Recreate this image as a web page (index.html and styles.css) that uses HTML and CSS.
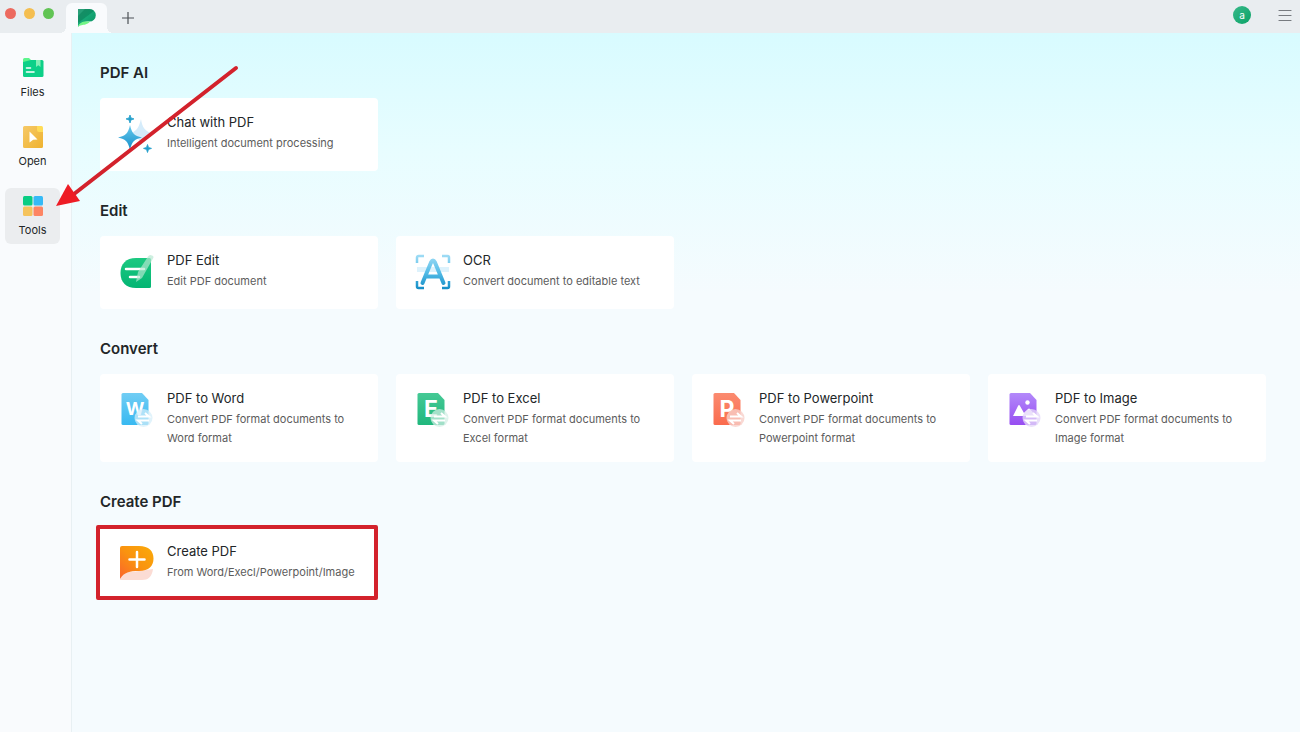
FILE: index.html
```html
<!DOCTYPE html>
<html lang="en">
<head>
<meta charset="utf-8">
<meta name="viewport" content="width=device-width, initial-scale=1">
<title>PDF Tools</title>
<link rel="stylesheet" href="styles.css">
</head>
<body>
<div class="app">
  <header class="titlebar">
    <div class="lights">
      <button class="light light-close" aria-label="Close"></button>
      <button class="light light-min" aria-label="Minimize"></button>
      <button class="light light-max" aria-label="Zoom"></button>
    </div>
    <button class="tab" aria-label="Home tab">
      <svg width="20" height="20" viewBox="0 0 20 20" aria-hidden="true">
        <defs><linearGradient id="logo" x1="0" y1="0" x2="1" y2="1"><stop offset="0" stop-color="#2f9c78"/><stop offset=".45" stop-color="#18a978"/><stop offset="1" stop-color="#07915f"/></linearGradient></defs>
        <path d="M1 1h11.500a6.300 6.300 0 0 1 0 12.600C7 13.600 3 15 1 19z" fill="url(#logo)"/>
        <path d="M1 8L8 1h4.500c2 0 3.500.7 4.500 2L1 15z" fill="#067a52" opacity=".5"/>
        <path d="M1 19c1-3.500 4-5.400 8-5.400h4C11 16.500 7 17 4.500 17.200 3 17.400 2 18 1 19z" fill="#72f586"/>
      </svg>
    </button>
    <button class="icon-btn" aria-label="New tab">
      <svg width="12" height="12" viewBox="0 0 12 12" aria-hidden="true"><path d="M6 0v12M0 6h12" stroke="#4d5156" stroke-width="1.200"/></svg>
    </button>
    <div class="account">
      <button class="avatar" aria-label="Account">a</button>
      <button class="icon-btn" aria-label="Menu">
        <svg width="14" height="12" viewBox="0 0 14 12" aria-hidden="true"><path d="M1 1.500h12M1 6.500h12M1 11.500h12" stroke="#777b80" stroke-width="1.200" stroke-linecap="round"/></svg>
      </button>
    </div>
  </header>

  <div class="body">
    <nav class="sidebar">
      <button class="nav-item">
        <svg width="22" height="22" viewBox="0 0 22 22" aria-hidden="true">
          <rect x="1" y="3" width="20.500" height="17" rx="1.500" fill="#0dd088"/>
          <path d="M1 5V2.500A1.500 1.500 0 0 1 2.500 1H7l2 2z" fill="#5df58d"/>
          <path d="M14 3h4.500v7l-2.200-1.800L14 10z" fill="#83efb6"/>
          <path d="M4.500 11h4M4.500 15h7.500" stroke="#fff" stroke-width="1.600" stroke-linecap="round"/>
        </svg>
        <span>Files</span>
      </button>
      <button class="nav-item">
        <svg width="22" height="22" viewBox="0 0 22 22" aria-hidden="true">
          <defs><linearGradient id="open" x1="0" y1="0" x2="1" y2="1"><stop offset="0" stop-color="#f6c968"/><stop offset="1" stop-color="#efb22f"/></linearGradient></defs>
          <path d="M2.500 0H15l6 6v14.500a1.500 1.500 0 0 1-1.500 1.500h-17A1.500 1.500 0 0 1 1 20.500v-19A1.500 1.500 0 0 1 2.500 0z" fill="url(#open)"/>
          <path d="M15 0h4.500A1.500 1.500 0 0 1 21 1.500V6h-4a2 2 0 0 1-2-2z" fill="#ffdc57"/>
          <path d="M7.500 5.500l8 8-4.300.2-3.700 2.800z" fill="#fff"/>
        </svg>
        <span>Open</span>
      </button>
      <button class="nav-item nav-item-active" aria-current="page">
        <svg width="22" height="22" viewBox="0 0 22 22" aria-hidden="true">
          <rect x="1" y="1" width="9.500" height="9.500" rx="1.500" fill="#09cd82"/>
          <rect x="11.500" y="1" width="9.500" height="9.500" rx="1.500" fill="#36baf6"/>
          <rect x="1" y="11.500" width="9.500" height="9.500" rx="1.500" fill="#f5c35c"/>
          <rect x="11.500" y="11.500" width="9.500" height="9.500" rx="1.500" fill="#fd8563"/>
        </svg>
        <span>Tools</span>
      </button>
    </nav>

    <main class="content">
      <section class="group">
        <h2>PDF AI</h2>
        <div class="cards">
          <button class="card">
            <svg class="card-icon" viewBox="0 0 38 38" aria-hidden="true">
              <defs><linearGradient id="star" x1="0" y1="0" x2="0" y2="1"><stop offset="0" stop-color="#66c9ed"/><stop offset="1" stop-color="#168fca"/></linearGradient></defs>
              <path d="M23 4c1 8 4 12 10 14-6 2-9 5-10 13-2-8-4-11-10-13 6-2 8-6 10-14z" fill="#d5ecfb"/>
              <path d="M12 10c2 8.500 4 10.500 12 12.500-8 2-10 4-12 12.500-2-8.500-4-10.500-12-12.500 8-2 10-4 12-12.500z" fill="url(#star)"/>
              <path d="M12 0l1 2.900 3 1-3 1-1 3.100-1-3.100-3-1 3-1zM29.500 29.500l1 2.900 3 1-3 1-1 3.100-1-3.100-3-1 3-1z" fill="#249fcb" stroke="#249fcb" stroke-width=".8"/>
            </svg>
            <span class="card-text"><span class="card-title">Chat with PDF</span><span class="card-desc">Intelligent document processing</span></span>
          </button>
        </div>
      </section>

      <section class="group">
        <h2>Edit</h2>
        <div class="cards">
          <button class="card">
            <svg class="card-icon" viewBox="0 0 38 38" aria-hidden="true">
              <defs><linearGradient id="edit" x1="0" y1="0" x2="0" y2="1"><stop offset="0" stop-color="#1cc981"/><stop offset="1" stop-color="#03b573"/></linearGradient></defs>
              <path d="M18 5h13.500A1.500 1.500 0 0 1 33 6.500v27a1.500 1.500 0 0 1-1.500 1.500H18C8 35 2.500 29 2.500 20S8 5 18 5z" fill="url(#edit)"/>
              <path d="M8 16h18M12 24h9" stroke="#fff" stroke-width="2.500" stroke-linecap="round"/>
              <path d="M34 2.500a2 2 0 0 1 1 3L24 25l-6 4 2-10L30 3.500a3 3 0 0 1 4-1z" fill="#b7e8d1" opacity=".68"/>
            </svg>
            <span class="card-text"><span class="card-title">PDF Edit</span><span class="card-desc">Edit PDF document</span></span>
          </button>
          <button class="card">
            <svg class="card-icon" viewBox="0 0 38 38" aria-hidden="true">
              <defs><linearGradient id="ocr" gradientUnits="userSpaceOnUse" x1="0" y1="2" x2="0" y2="36"><stop offset="0" stop-color="#a0dcf5"/><stop offset=".5" stop-color="#55bde8"/><stop offset="1" stop-color="#148dc6"/></linearGradient></defs>
              <path d="M3 10V4.500A1.500 1.500 0 0 1 4.500 3H10M28 3h5.500A1.500 1.500 0 0 1 35 4.500V10M3 28v5.500A1.500 1.500 0 0 0 4.500 35H10M28 35h5.500a1.500 1.500 0 0 0 1.500-1.500V28" fill="none" stroke="url(#ocr)" stroke-width="2.500"/>
              <path d="M3 14h32v5H3z" fill="#d5effb" opacity=".8"/>
              <path d="M8.500 30L17 9.500q2-4 4 0L29.500 30M13 23.500h12" fill="none" stroke="url(#ocr)" stroke-width="4" stroke-linecap="round"/>
            </svg>
            <span class="card-text"><span class="card-title">OCR</span><span class="card-desc">Convert document to editable text</span></span>
          </button>
        </div>
      </section>

      <section class="group">
        <h2>Convert</h2>
        <div class="cards">
          <button class="card">
            <svg class="card-icon" viewBox="0 0 38 38" aria-hidden="true">
              <defs><linearGradient id="word" x1="0" y1="0" x2="0" y2="1"><stop offset="0" stop-color="#71cdf4"/><stop offset="1" stop-color="#38b9f1"/></linearGradient></defs>
              <path d="M5 2h19l6.500 7v23.500a1.500 1.500 0 0 1-1.500 1.500H5a1.500 1.500 0 0 1-1.500-1.500v-29A1.500 1.500 0 0 1 5 2z" fill="url(#word)"/>
              <text class="glyph" x="17" y="24" font-size="18">W</text>
              <circle cx="25.500" cy="27" r="9" fill="#d5eef9" opacity=".72"/>
              <path d="M20 25.500h11l-4-3.500M31 29.500H20l4 3.500" fill="none" stroke="#fff" stroke-width="2"/>
            </svg>
            <span class="card-text"><span class="card-title">PDF to Word</span><span class="card-desc">Convert PDF format documents to Word format</span></span>
          </button>
          <button class="card">
            <svg class="card-icon" viewBox="0 0 38 38" aria-hidden="true">
              <defs><linearGradient id="excel" x1="0" y1="0" x2="0" y2="1"><stop offset="0" stop-color="#45c995"/><stop offset="1" stop-color="#20b77d"/></linearGradient></defs>
              <path d="M5 2h19l6.500 7v23.500a1.500 1.500 0 0 1-1.500 1.500H5a1.500 1.500 0 0 1-1.500-1.500v-29A1.500 1.500 0 0 1 5 2z" fill="url(#excel)"/>
              <text class="glyph" x="17" y="26" font-size="23">E</text>
              <circle cx="25.500" cy="27" r="9" fill="#d2eee4" opacity=".72"/>
              <path d="M20 25.500h11l-4-3.500M31 29.500H20l4 3.500" fill="none" stroke="#fff" stroke-width="2"/>
            </svg>
            <span class="card-text"><span class="card-title">PDF to Excel</span><span class="card-desc">Convert PDF format documents to Excel format</span></span>
          </button>
          <button class="card">
            <svg class="card-icon" viewBox="0 0 38 38" aria-hidden="true">
              <defs><linearGradient id="ppt" x1="0" y1="0" x2="0" y2="1"><stop offset="0" stop-color="#fb8b70"/><stop offset="1" stop-color="#fa6b4d"/></linearGradient></defs>
              <path d="M5 2h19l6.500 7v23.500a1.500 1.500 0 0 1-1.500 1.500H5a1.500 1.500 0 0 1-1.500-1.500v-29A1.500 1.500 0 0 1 5 2z" fill="url(#ppt)"/>
              <text class="glyph" x="17" y="26" font-size="23">P</text>
              <circle cx="25.500" cy="27" r="9" fill="#f8d0c9" opacity=".8"/>
              <path d="M20 25.500h11l-4-3.500M31 29.500H20l4 3.500" fill="none" stroke="#fff" stroke-width="2"/>
            </svg>
            <span class="card-text"><span class="card-title">PDF to Powerpoint</span><span class="card-desc">Convert PDF format documents to Powerpoint format</span></span>
          </button>
          <button class="card">
            <svg class="card-icon" viewBox="0 0 38 38" aria-hidden="true">
              <defs><linearGradient id="image" x1="0" y1="0" x2="0" y2="1"><stop offset="0" stop-color="#b389fa"/><stop offset="1" stop-color="#974df1"/></linearGradient></defs>
              <path d="M5 2h19l6.500 7v23.500a1.500 1.500 0 0 1-1.500 1.500H5a1.500 1.500 0 0 1-1.500-1.500v-29A1.500 1.500 0 0 1 5 2z" fill="url(#image)"/>
              <path d="M7 25l5-10q1-2 2 0l4 7 4-4q1-1 2 0l6 7z" fill="#fff"/><circle cx="21.500" cy="11.500" r="2.200" fill="#fff"/>
              <circle cx="25.500" cy="27" r="9" fill="#e4d7f8" opacity=".78"/>
              <path d="M20 25.500h11l-4-3.500M31 29.500H20l4 3.500" fill="none" stroke="#fff" stroke-width="2"/>
            </svg>
            <span class="card-text"><span class="card-title">PDF to Image</span><span class="card-desc">Convert PDF format documents to Image format</span></span>
          </button>
        </div>
      </section>

      <section class="group">
        <h2>Create PDF</h2>
        <div class="cards">
          <button class="card card-marked">
            <svg class="card-icon" viewBox="0 0 38 38" aria-hidden="true">
              <defs><linearGradient id="create" x1="1" y1="0" x2="0" y2="1"><stop offset="0" stop-color="#faab08"/><stop offset=".5" stop-color="#fa930f"/><stop offset="1" stop-color="#fa642d"/></linearGradient></defs>
              <path d="M2 36c1-6 5-8 12-8l21-3c-1 8-5 11-11 11z" fill="#fbdcd4"/>
              <path d="M4 2h17c10 0 14.500 5 14.500 12.500S31 27 21 27C12 27 6 28 2 35V4a2 2 0 0 1 2-2z" fill="url(#create)"/>
              <path d="M19 8v15M11.500 15.500h15" stroke="#fff" stroke-width="2.500" stroke-linecap="round"/>
            </svg>
            <span class="card-text"><span class="card-title">Create PDF</span><span class="card-desc">From Word/Execl/Powerpoint/Image</span></span>
          </button>
        </div>
      </section>
    </main>
  </div>

  <svg class="arrow" width="190" height="150" viewBox="0 0 190 150" aria-hidden="true">
    <path d="M186 8L24 134" stroke="#d3222c" stroke-width="4" stroke-linecap="round"/>
    <path d="M6 146L18 124L30 141z" fill="#ee1c25"/>
  </svg>
</div>
</body>
</html>
```
FILE: styles.css
```css
* { box-sizing: border-box; }

body {
  margin: 0;
  font-family: Inter, "Liberation Sans", sans-serif;
  color: #222628;
}

button {
  margin: 0;
  padding: 0;
  border: 0;
  background: none;
  color: inherit;
  font: inherit;
}

svg { display: block; flex: none; }

.app {
  position: relative;
  display: flex;
  flex-direction: column;
  min-height: 100vh;
}

.titlebar {
  display: flex;
  align-items: flex-end;
  height: 33px;
  background: #e9edf0;
}

.lights {
  display: flex;
  align-self: flex-start;
  gap: 8px;
  width: 66px;
  padding: 8px 0 0 5px;
}

.light { width: 11px; height: 11px; border-radius: 50%; }
.light-close { background: #ec6a5f; }
.light-min { background: #f4be50; }
.light-max { background: #61c454; }

.tab {
  position: relative;
  display: flex;
  align-items: center;
  justify-content: center;
  width: 41px;
  height: 30px;
  border-radius: 6px 6px 0 0;
  background: #f9fbfd;
}

.tab::before,
.tab::after {
  content: "";
  position: absolute;
  bottom: 0;
  width: 6px;
  height: 6px;
}

.tab::before {
  right: 100%;
  background: radial-gradient(circle at 0 0, transparent 6px, #f9fbfd 6px);
}

.tab::after {
  left: 100%;
  background: radial-gradient(circle at 100% 0, transparent 6px, #f9fbfd 6px);
}

.icon-btn {
  display: flex;
  align-items: center;
  justify-content: center;
  width: 30px;
  height: 30px;
}

.titlebar > .icon-btn { margin-left: 6px; }

.account {
  display: flex;
  align-items: center;
  align-self: flex-start;
  gap: 19px;
  margin-left: auto;
}

.avatar {
  width: 18px;
  height: 18px;
  border-radius: 50%;
  background: linear-gradient(135deg, #38b98a, #0aa266);
  color: #fff;
  font-size: 10px;
  line-height: 18px;
}

.body { display: flex; flex: 1; }

.sidebar {
  display: flex;
  flex: none;
  flex-direction: column;
  gap: 13px;
  width: 72px;
  padding: 17px 11px 0 5px;
  border-right: 1px solid #e8f0f3;
  background: #f9fbfd;
}

.nav-item {
  display: flex;
  flex-direction: column;
  align-items: center;
  gap: 5px;
  padding: 7px 0 6px;
  border-radius: 6px;
  font-size: 11px;
  line-height: 16px;
}

.nav-item-active { background: #ebedef; }

.content {
  display: flex;
  flex: 1;
  flex-direction: column;
  gap: 28px;
  padding: 28px 34px 28px 28px;
  background: #f5fbfe linear-gradient(#d8fbff, #e8fdff 120px, #f5fbfe 260px);
}

h2 {
  margin: 0 0 13px;
  font-size: 15px;
  font-weight: 600;
  line-height: 24px;
}

.cards {
  display: grid;
  grid-template-columns: repeat(4, 1fr);
  gap: 18px;
}

.card {
  position: relative;
  display: flex;
  align-items: flex-start;
  gap: 11px;
  min-height: 73px;
  padding: 14px 20px 14px 18px;
  border-radius: 4px;
  background: #fff;
  text-align: left;
}

.card-icon { width: 38px; height: 38px; margin-top: 3px; }

.glyph { fill: #fff; font-weight: 700; text-anchor: middle; }

.card-text { display: flex; flex-direction: column; gap: 1px; }
.card-title { font-size: 13px; line-height: 21px; }
.card-desc { color: #5c5c5c; font-size: 11px; line-height: 19px; }

.card-marked::after {
  content: "";
  position: absolute;
  inset: -2px 0 0 -4px;
  border: 4px solid #d3222c;
  border-radius: 2px;
}

.arrow {
  position: absolute;
  top: 60px;
  left: 50px;
  pointer-events: none;
}
```
